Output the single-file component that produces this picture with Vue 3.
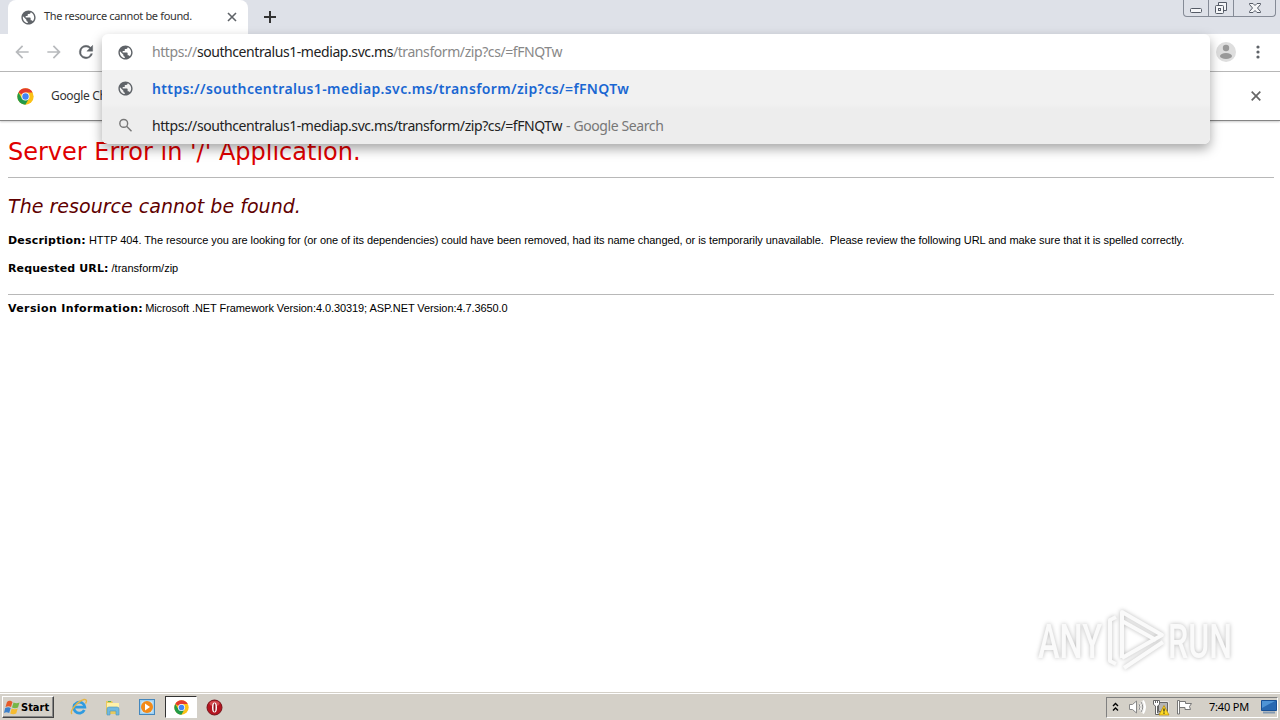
<template>
  <div class="desktop">
    <header class="tab-strip">
      <div class="tab">
        <svg class="globe" viewBox="0 0 24 24"><path :d="globePath" /></svg>
        <span class="tab-title">The resource cannot be found.</span>
        <svg class="tab-close" viewBox="0 0 10 10"><path d="M1 1l8 8M9 1l-8 8" /></svg>
      </div>
      <svg class="new-tab" viewBox="0 0 12 12"><path d="M6 0v12M0 6h12" /></svg>
      <div class="window-controls">
        <span class="control">
          <svg width="14" height="14" viewBox="0 0 14 14"><rect x="1.5" y="7.5" width="11" height="4" rx="1" /></svg>
        </span>
        <span class="control">
          <svg width="14" height="14" viewBox="0 0 14 14">
            <path d="M4.500 4V1.500h8v8H10" />
            <rect x="1.500" y="4.500" width="8" height="8" rx="1" />
            <rect x="4.500" y="7.500" width="2" height="2" />
          </svg>
        </span>
        <span class="control wide">
          <svg width="14" height="14" viewBox="0 0 14 14"><path d="M1.500 2.500h3.500l2 2 2-2h3.500v1L9.500 7l3 3.500v1H9l-2-2-2 2H1.500v-1l3-3.500-3-3.500z" /></svg>
        </span>
      </div>
    </header>

    <nav class="toolbar">
      <svg class="nav-icon muted" viewBox="0 0 24 24"><path d="M20 11H7.830l5.590-5.590L12 4l-8 8 8 8 1.410-1.410L7.830 13H20v-2z" /></svg>
      <svg class="nav-icon muted" viewBox="0 0 24 24"><path d="M12 4l-1.410 1.410L16.170 11H4v2h12.170l-5.580 5.590L12 20l8-8z" /></svg>
      <svg class="nav-icon reload" viewBox="0 0 24 24"><path d="M17.650 6.350A7.958 7.958 0 0 0 12 4a8 8 0 1 0 7.730 10h-2.080A6 6 0 1 1 12 6c1.660 0 3.140.69 4.220 1.780L13 11h7V4l-2.350 2.350z" /></svg>
      <svg class="avatar" viewBox="0 0 20 20">
        <circle cx="10" cy="10" r="10" fill="#dedede" />
        <circle cx="10" cy="6" r="3.200" fill="#999" />
        <ellipse cx="10" cy="14" rx="6" ry="3" fill="#999" />
      </svg>
      <svg class="menu-dots" viewBox="0 0 4 14">
        <circle cx="2" cy="2" r="1.600" /><circle cx="2" cy="7" r="1.600" /><circle cx="2" cy="12" r="1.600" />
      </svg>
    </nav>

    <div class="infobar">
      <svg class="chrome-logo" viewBox="0 0 48 48"><use href="#chrome" /></svg>
      <span class="infobar-text">Google Chrome</span>
      <svg class="infobar-close" viewBox="0 0 10 10"><path d="M.7.7l8.600 8.600M9.300.7L.7 9.300" /></svg>
    </div>

    <section class="omnibox">
      <div class="omni-row input-row">
        <svg class="globe" viewBox="0 0 24 24"><path :d="globePath" /></svg>
        <span class="url"><i>https://</i>{{ host }}<i>{{ path }}</i></span>
      </div>
      <div class="omni-row">
        <svg class="globe" viewBox="0 0 24 24"><path :d="globePath" /></svg>
        <span class="url match">https://{{ host }}{{ path }}</span>
      </div>
      <div class="omni-row search-row">
        <svg class="globe search" viewBox="0 0 24 24"><circle cx="9.500" cy="9" r="5.500" /><path d="M13.500 13l7 7" /></svg>
        <span class="url">https://{{ host }}{{ path }}</span>
        <span class="suffix">- Google Search</span>
      </div>
    </section>

    <main class="page">
      <h1>Server Error in '/' Application.</h1>
      <hr />
      <h2>The resource cannot be found.</h2>
      <p class="description"><b>Description:</b><span>HTTP 404. The resource you are looking for (or one of its dependencies) could have been removed, had its name changed, or is temporarily unavailable. &nbsp;Please review the following URL and make sure that it is spelled correctly.</span></p>
      <p class="requested"><b>Requested URL:</b><span>/transform/zip</span></p>
      <hr />
      <p class="version"><b>Version Information:</b><span>Microsoft .NET Framework Version:4.0.30319; ASP.NET Version:4.7.3650.0</span></p>
    </main>

    <svg class="watermark" viewBox="0 0 220 80">
      <g class="mark-text">
        <text x="8" y="58" textLength="64" lengthAdjust="spacingAndGlyphs">ANY</text>
        <text x="138" y="58" textLength="64" lengthAdjust="spacingAndGlyphs">RUN</text>
      </g>
      <g class="mark-play">
        <path d="M86 64l-6-3V20l6-3" />
        <path d="M92 58V12l40 23-40 23" />
        <path d="M92 21l34 19" />
        <path d="M133 42L94 68" />
      </g>
    </svg>

    <footer class="taskbar">
      <button class="start">
        <svg width="17" height="17" viewBox="0 0 17 17">
          <path d="M3 3c2-2 4-1 5.500 0L7 8C5.500 7 3.500 7 1.500 8z" fill="#e65a28" />
          <path d="M9.500 3.500c2 1 4 1 6 0L14 8.500c-2 1-4 1-6 0z" fill="#76b646" />
          <path d="M1.200 9c2-1 4-1 5.500 0l-1.500 5c-2-1-3.500-1-5.200 0z" fill="#3c80cb" />
          <path d="M7.700 9.500c2 1 4 1 6 0l-1.500 5c-2 1-4 1-6 0z" fill="#f5bb30" />
        </svg>
        <span>Start</span>
      </button>
      <div class="launcher">
        <svg width="18" height="18" viewBox="0 0 18 18">
          <path d="M14.300 12A5.500 5.500 0 1 1 14.800 9.200H5" fill="none" stroke="#2f9be0" stroke-width="2.800" />
          <path d="M2 16C-1 13 8 3 14 1.500c3-.5 3 2 1.500 4" fill="none" stroke="#e5b545" stroke-width="1.400" />
        </svg>
      </div>
      <div class="launcher">
        <svg width="18" height="18" viewBox="0 0 18 18">
          <path d="M2 3h6l1 2h6v11H2z" fill="#e9c95d" />
          <path d="M3 5h12v5H3z" fill="#fff2a8" />
          <path d="M4 3h3v1H4z" fill="#58b55d" />
          <path d="M3 17v-6q0-2 2-2h8q2 0 2 2v6h-3v-4H6v4z" fill="#70b9df" stroke="#4d93bd" stroke-width=".6" />
        </svg>
      </div>
      <div class="launcher">
        <svg width="18" height="18" viewBox="0 0 18 18">
          <rect x="1.500" y="1.500" width="15" height="15" fill="#9ed0f2" stroke="#4487bd" />
          <rect x="3.500" y="3.500" width="11" height="11" fill="#d8edf9" />
          <circle cx="9" cy="9" r="6" fill="#f28a19" />
          <path d="M7 5.500l5 3.500-5 3.500z" fill="#fff" />
        </svg>
      </div>
      <div class="launcher active">
        <svg width="15" height="15" viewBox="0 0 48 48">
          <g id="chrome">
            <circle cx="24" cy="24" r="23" fill="#fbc116" />
            <path d="M24 24L4 12.600A23 23 0 0 1 44 12.600H24z" fill="#e33b2e" />
            <path d="M4 12.600A23 23 0 0 0 23.500 47L34 29.700 24 24 14 29.700z" fill="#229a48" />
            <circle cx="24" cy="24" r="11.400" fill="#fff" />
            <circle cx="24" cy="24" r="9" fill="#4285f4" />
          </g>
        </svg>
      </div>
      <div class="launcher opera">
        <svg width="17" height="17" viewBox="0 0 17 17">
          <circle cx="8.500" cy="8.500" r="7.500" fill="#b51520" stroke="#74131a" />
          <ellipse cx="8.500" cy="4.500" rx="5" ry="2.500" fill="#d24a4e" />
          <ellipse cx="8.500" cy="8.500" rx="2.500" ry="5" fill="#fff" />
          <ellipse cx="8.500" cy="8.500" rx="1" ry="4.200" fill="#8d1119" />
        </svg>
      </div>
      <div class="tray">
        <svg class="chevrons" width="7" height="10" viewBox="0 0 7 10"><path d="M1 4l2.500-2.500L6 4M1 8.500L3.500 6 6 8.500" /></svg>
        <svg class="speaker" width="18" height="16" viewBox="0 0 18 16">
          <path d="M1.500 5.500h3L8.500 2v12l-4-3.500h-3z" fill="#fff" />
          <path d="M11 5q2 3 0 6M13 3q3.500 5 0 10M15 1.500q4 6.500 0 13" fill="none" stroke="#fff" stroke-width="2" />
          <path d="M11 5q2 3 0 6M13 3q3.500 5 0 10" fill="none" />
        </svg>
        <svg class="network" width="18" height="17" viewBox="0 0 18 17">
          <path d="M6.500 3.500h9v9h-9z" fill="#b5b5b5" stroke="#fff" stroke-width="2" />
          <path d="M6.500 3.500h9v9h-9z" fill="#b5b5b5" stroke="#666" />
          <path d="M1.500 1.500h6v4l-2 1.500v7h3v1.500h-5V7l-2-1.500z" fill="#fff" stroke="#666" />
          <path d="M3.500 1v3M5.500 1v3" stroke="#666" />
          <path d="M12 6.500l5 9.500H7z" fill="#ffdb24" stroke="#b98700" stroke-width=".7" />
          <path d="M12 9.500v3M12 13.500v1.200" stroke="#222" stroke-width="1.200" />
        </svg>
        <svg class="flag" width="18" height="16" viewBox="0 0 18 16"><path d="M1.500 1.500h2V15h-2zM3.500 2.500h6v2h6l-2 3 1 3H9v-2H3.500z" /></svg>
        <span class="clock">7:40 PM</span>
        <svg class="show-desktop" width="16" height="14" viewBox="0 0 16 14">
          <path d="M.5.500h15v10H.5z" fill="#2768b1" stroke="#175096" />
          <path d="M1 1h13L1 8z" fill="#4e94d6" />
          <path d="M2 12.500h12" stroke="#8299b1" stroke-width="2" />
        </svg>
      </div>
    </footer>
  </div>
</template>

<script setup>
const host = 'southcentralus1-mediap.svc.ms'
const path = '/transform/zip?cs/=fFNQTw'

const globePath =
  'M12 2C6.480 2 2 6.480 2 12s4.480 10 10 10 10-4.480 10-10S17.520 2 12 2zm-1 17.930c-3.950-.49-7-3.850-7-7.930 0-.62.080-1.210.210-1.790L9 15v1c0 1.100.9 2 2 2v1.930zm6.900-2.540c-.260-.810-1-1.390-1.900-1.390h-1v-3c0-.55-.45-1-1-1H8v-2h2c.55 0 1-.45 1-1V7h2c1.100 0 2-.9 2-2v-.41c2.930 1.190 5 4.060 5 7.410 0 2.080-.8 3.970-2.100 5.390z'
</script>

<style>
body {
  overflow: hidden;
}
</style>

<style scoped>
.desktop {
  position: relative;
  display: flex;
  flex-direction: column;
  width: 1280px;
  height: 720px;
  background: #fff;
  font-family: "Noto Sans", "DejaVu Sans", sans-serif;
}

.desktop * {
  box-sizing: border-box;
}

svg {
  display: block;
  flex: none;
}

.tab-strip {
  display: flex;
  height: 34px;
  flex: none;
  padding-left: 8px;
  background: #dee1e8;
}

.tab {
  display: flex;
  align-items: center;
  width: 240px;
  padding: 0 11px 0 12px;
  border-radius: 8px 8px 0 0;
  background: #fff;
}

.globe {
  width: 17px;
  height: 17px;
  fill: #5f6368;
}

.globe.search {
  fill: none;
  stroke: #777;
  stroke-width: 2;
}

.tab-title {
  margin-left: 7px;
  color: #333;
  font-size: 11px;
  letter-spacing: -0.35px;
  line-height: 16px;
  margin-top: -2px;
  white-space: nowrap;
}

.tab-close {
  width: 10px;
  height: 10px;
  margin-left: auto;
  stroke: #5f6368;
  stroke-width: 1.6;
}

.new-tab {
  width: 12px;
  height: 12px;
  margin: 11px 0 0 16px;
  stroke: #333;
  stroke-width: 2;
}

.window-controls {
  display: flex;
  width: 93px;
  height: 17px;
  margin: 0 4px 0 auto;
  border: 1px solid #858b96;
  border-top: 0;
  border-radius: 0 0 4px 4px;
}

.control {
  display: flex;
  justify-content: center;
  width: 25px;
  padding-top: 1px;
  border-right: 1px solid #858b96;
}

.control.wide {
  width: 41px;
  border: 0;
}

.control svg {
  fill: #f5f6f8;
  stroke: #555b66;
}

.toolbar {
  display: flex;
  align-items: center;
  height: 38px;
  flex: none;
  padding: 0 20px 2px 12px;
  border-bottom: 1px solid #b5b5b5;
}

.nav-icon {
  width: 20px;
  height: 20px;
  margin-right: 12px;
  fill: #5f6368;
}

.nav-icon.muted {
  fill: #b8babd;
}

.nav-icon.reload {
  stroke: #5f6368;
  stroke-width: 0.5;
}

.avatar {
  width: 20px;
  height: 20px;
  margin-left: auto;
}

.menu-dots {
  width: 4px;
  height: 14px;
  margin-left: 20px;
  fill: #5f6368;
}

.infobar {
  display: flex;
  align-items: center;
  height: 49px;
  flex: none;
  padding: 0 19px 0 17px;
  border-bottom: 1px solid #858585;
  box-shadow: 0 1px 2px #ccc;
}

.chrome-logo {
  width: 17px;
  height: 17px;
}

.infobar-text {
  margin: -2px 0 0 17px;
  color: #333;
  font-size: 12px;
  letter-spacing: -0.35px;
}

.infobar-close {
  width: 10px;
  height: 10px;
  margin-left: auto;
  stroke: #666;
  stroke-width: 1.7;
}

/* The suggestion list drops over the toolbar and the page */
.omnibox {
  position: absolute;
  z-index: 2;
  top: 34px;
  left: 102px;
  width: 1108px;
  height: 110px;
  overflow: hidden;
  border-radius: 6px;
  background: linear-gradient(#f1f1f1 70px, #ededed 75px);
}

.desktop::after {
  position: absolute;
  z-index: 1;
  top: 34px;
  left: 102px;
  width: 1108px;
  height: 110px;
  border-radius: 6px;
  box-shadow: 0 5px 12px rgba(0, 0, 0, 0.35);
  content: "";
}

.omni-row {
  display: flex;
  align-items: center;
  height: 37px;
  padding-left: 15px;
}

.input-row {
  height: 36px;
  background: #fff;
}

.url {
  margin-left: 18px;
  color: #222;
  font-size: 14px;
  letter-spacing: -0.42px;
  white-space: pre;
}

.input-row .url {
  margin-top: -2px;
}

.url i {
  color: #888;
  font-style: normal;
}

.url.match {
  color: #1a67d2;
  font-weight: 600;
  letter-spacing: 0.37px;
}

.suffix {
  margin-left: 4px;
  color: #777;
  font-size: 14px;
  letter-spacing: -0.4px;
}

.page {
  flex: 1;
  padding: 14px 6px 0 8px;
  color: #000;
  font-family: "Liberation Sans", Arial, sans-serif;
  font-size: 11px;
}

h1,
h2 {
  margin: 0;
  font-family: "DejaVu Sans", Verdana, sans-serif;
  font-weight: 400;
  white-space: nowrap;
}

h1 {
  height: 42px;
  color: #df0000;
  font-size: 24px;
  line-height: 34px;
}

h2 {
  height: 28px;
  margin-top: 14px;
  color: #600000;
  font-size: 19px;
  font-style: italic;
  letter-spacing: 0.03px;
  line-height: 28px;
}

hr {
  height: 1px;
  margin: 0;
  border: 0;
  background: #b8b8b8;
}

p {
  display: flex;
  height: 14px;
  margin: 0;
  line-height: 14px;
  white-space: nowrap;
}

p b {
  margin-right: 3px;
  font-family: "DejaVu Sans", Verdana, sans-serif;
  line-height: 16px;
}

.description {
  margin-top: 13px;
  letter-spacing: -0.06px;
}

.description b {
  letter-spacing: 0.2px;
}

.requested {
  margin: 14px 0 19px;
}

.requested b {
  letter-spacing: 0.12px;
}

.version {
  margin-top: 6px;
  letter-spacing: -0.08px;
}

.version b {
  margin-right: 2px;
  letter-spacing: 0.37px;
}

.watermark {
  position: absolute;
  top: 600px;
  left: 1030px;
  width: 220px;
  height: 80px;
  filter: drop-shadow(0 0 2px #bbb);
}

.mark-text {
  fill: #fafafa;
  font: 500 48px Roboto, sans-serif;
}

.mark-play {
  fill: none;
  stroke: #fafafa;
  stroke-linejoin: round;
  stroke-width: 4;
}

.taskbar {
  display: flex;
  height: 28px;
  flex: none;
  align-items: center;
  padding: 2px 0 1px 2px;
  border-top: 1px solid #d4d0c8;
  background: #d4d0c8;
  box-shadow: inset 0 1px #fff;
}

.start {
  display: flex;
  align-items: center;
  width: 52px;
  height: 22px;
  padding: 0 1px;
  border: 1px solid;
  border-color: #fff #444 #444 #fff;
  background: #d4d0c8;
  box-shadow: inset -1px -1px #888;
  color: #000;
  font: bold 11px "DejaVu Sans Condensed", "DejaVu Sans", sans-serif;
}

.launcher {
  display: flex;
  align-items: center;
  justify-content: center;
  width: 32px;
  height: 22px;
  margin-left: 2px;
}

.start + .launcher {
  margin-left: 9px;
}

.launcher.active {
  border: 1px solid;
  border-color: #333 #fff #fff #333;
  background: #fff;
}

.launcher.opera {
  margin-left: 1px;
}

.tray {
  display: flex;
  align-items: center;
  width: 172px;
  height: 21px;
  margin: 0 2px 0 auto;
  padding-left: 5px;
  border: 1px solid;
  border-color: #808080 #fff #fff #808080;
}

.chevrons {
  fill: none;
  stroke: #000;
  stroke-width: 1.4;
}

.speaker {
  margin-left: 9px;
  stroke: #888;
}

.network {
  margin-left: 6px;
}

.flag {
  margin-left: 6px;
  fill: #fff;
  stroke: #777;
}

.clock {
  margin: -1px 0 0 15px;
  color: #000;
  font-size: 11px;
  letter-spacing: -0.2px;
  white-space: nowrap;
}

.show-desktop {
  margin-left: auto;
}
</style>
